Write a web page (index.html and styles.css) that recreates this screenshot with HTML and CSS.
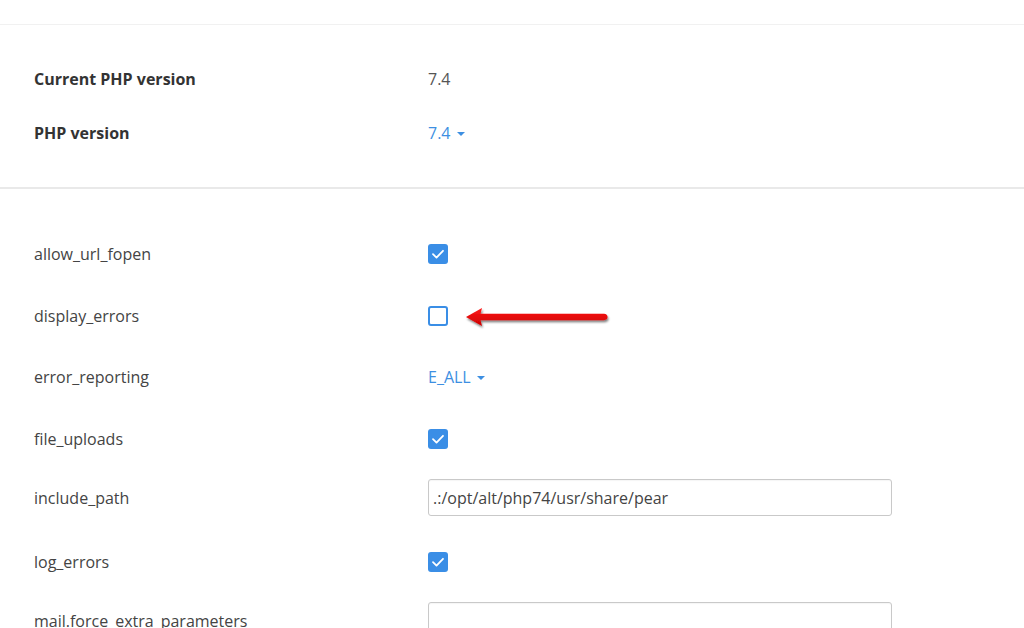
FILE: index.html
```html
<!DOCTYPE html>
<html>
<head>
<meta charset="utf-8">
<link rel="stylesheet" href="styles.css">
</head>
<body>
<div class="page">
  <div class="top-gap"></div>
  <section class="summary">
    <div class="row-sm">
      <div class="label bold">Current PHP version</div>
      <div class="value">7.4</div>
    </div>
    <div class="row-sm">
      <div class="label bold">PHP version</div>
      <div class="value link">7.4 <span class="caret"></span></div>
    </div>
  </section>
  <section class="options">
    <div class="row">
      <div class="label">allow_url_fopen</div>
      <div class="value"><span class="cb checked"><svg viewBox="0 0 20 20" width="20" height="20"><path d="M5 10.2 L8.5 13.6 L15 6.8" fill="none" stroke="#fff" stroke-width="1.8" stroke-linecap="round" stroke-linejoin="round"/></svg></span></div>
    </div>
    <div class="row">
      <div class="label">display_errors</div>
      <div class="value marked"><span class="cb"></span>
        <svg class="arrow" width="160" height="30" viewBox="0 0 160 30">
          <defs>
            <filter id="sh" x="-10%" y="-50%" width="120%" height="200%">
              <feGaussianBlur in="SourceAlpha" stdDeviation="1.2"/>
              <feOffset dx="1" dy="2" result="b"/>
              <feComponentTransfer><feFuncA type="linear" slope="0.5"/></feComponentTransfer>
              <feMerge><feMergeNode/><feMergeNode in="SourceGraphic"/></feMerge>
            </filter>
            <linearGradient id="rg" x1="0" y1="0" x2="0" y2="1">
              <stop offset="0" stop-color="#ff1a1a"/>
              <stop offset="1" stop-color="#cc0000"/>
            </linearGradient>
          </defs>
          <g filter="url(#sh)">
            <path d="M1 15 L17 6 L15.5 11.8 L139 11.8 Q142.5 12.2 142.5 15 Q142.5 17.8 139 18.2 L15.5 18.2 L17 24 Z" fill="url(#rg)"/>
          </g>
        </svg>
      </div>
    </div>
    <div class="row">
      <div class="label">error_reporting</div>
      <div class="value link">E_ALL <span class="caret"></span></div>
    </div>
    <div class="row">
      <div class="label">file_uploads</div>
      <div class="value"><span class="cb checked"><svg viewBox="0 0 20 20" width="20" height="20"><path d="M5 10.2 L8.5 13.6 L15 6.8" fill="none" stroke="#fff" stroke-width="1.8" stroke-linecap="round" stroke-linejoin="round"/></svg></span></div>
    </div>
    <div class="row input-row">
      <div class="label">include_path</div>
      <div class="value"><div class="input">.:/opt/alt/php74/usr/share/pear</div></div>
    </div>
    <div class="row">
      <div class="label">log_errors</div>
      <div class="value"><span class="cb checked"><svg viewBox="0 0 20 20" width="20" height="20"><path d="M5 10.2 L8.5 13.6 L15 6.8" fill="none" stroke="#fff" stroke-width="1.8" stroke-linecap="round" stroke-linejoin="round"/></svg></span></div>
    </div>
    <div class="row input-row">
      <div class="label">mail.force_extra_parameters</div>
      <div class="value"><div class="input"></div></div>
    </div>
  </section>
</div>
</body>
</html>
```
FILE: styles.css
```css
html, body {
  margin: 0;
  padding: 0;
  background: #fff;
  overflow: hidden;
}
body {
  font-family: "Open Sans", "Noto Sans", sans-serif;
  font-size: 16px;
  color: #444;
}
.page {
  width: 1024px;
  height: 628px;
  overflow: hidden;
}
.top-gap {
  height: 24px;
}
.summary {
  border-top: 1px solid #f1f1f1;
  border-bottom: 2px solid #e9e9e9;
  padding: 27px 0 27px 34px;
}
.row-sm {
  display: flex;
  align-items: center;
  height: 54px;
}
.label {
  width: 394px;
  flex: none;
  color: #444;
}
.label.bold {
  font-weight: 700;
  color: #333;
}
.value {
  color: #555;
  display: flex;
  align-items: center;
}
.link {
  color: #3d8fe2;
}
.caret {
  display: inline-block;
  width: 0;
  height: 0;
  margin-left: 6px;
  margin-top: 2px;
  border-left: 4px solid transparent;
  border-right: 4px solid transparent;
  border-top: 4px solid #3d8fe2;
}
.options {
  padding: 34px 0 0 34px;
}
.row {
  display: flex;
  align-items: center;
  height: 61.7px;
}
.input-row {
  box-sizing: border-box;
  padding-bottom: 6px;
}
.cb {
  box-sizing: border-box;
  width: 20px;
  height: 20px;
  border: 2px solid #3a8ee6;
  border-radius: 3px;
  display: block;
  background: #fff;
}
.cb.checked {
  border: none;
  background: #3a8ee6;
}
.cb svg {
  display: block;
}
.marked {
  position: relative;
}
.arrow {
  position: absolute;
  left: 37px;
  top: -4px;
}
.input {
  box-sizing: border-box;
  width: 464px;
  height: 37px;
  border: 1px solid #c9c9c9;
  border-radius: 3px;
  padding: 0 4px;
  display: flex;
  align-items: center;
  color: #444;
  box-shadow: inset 0 1px 1px rgba(0,0,0,0.04);
}
```
